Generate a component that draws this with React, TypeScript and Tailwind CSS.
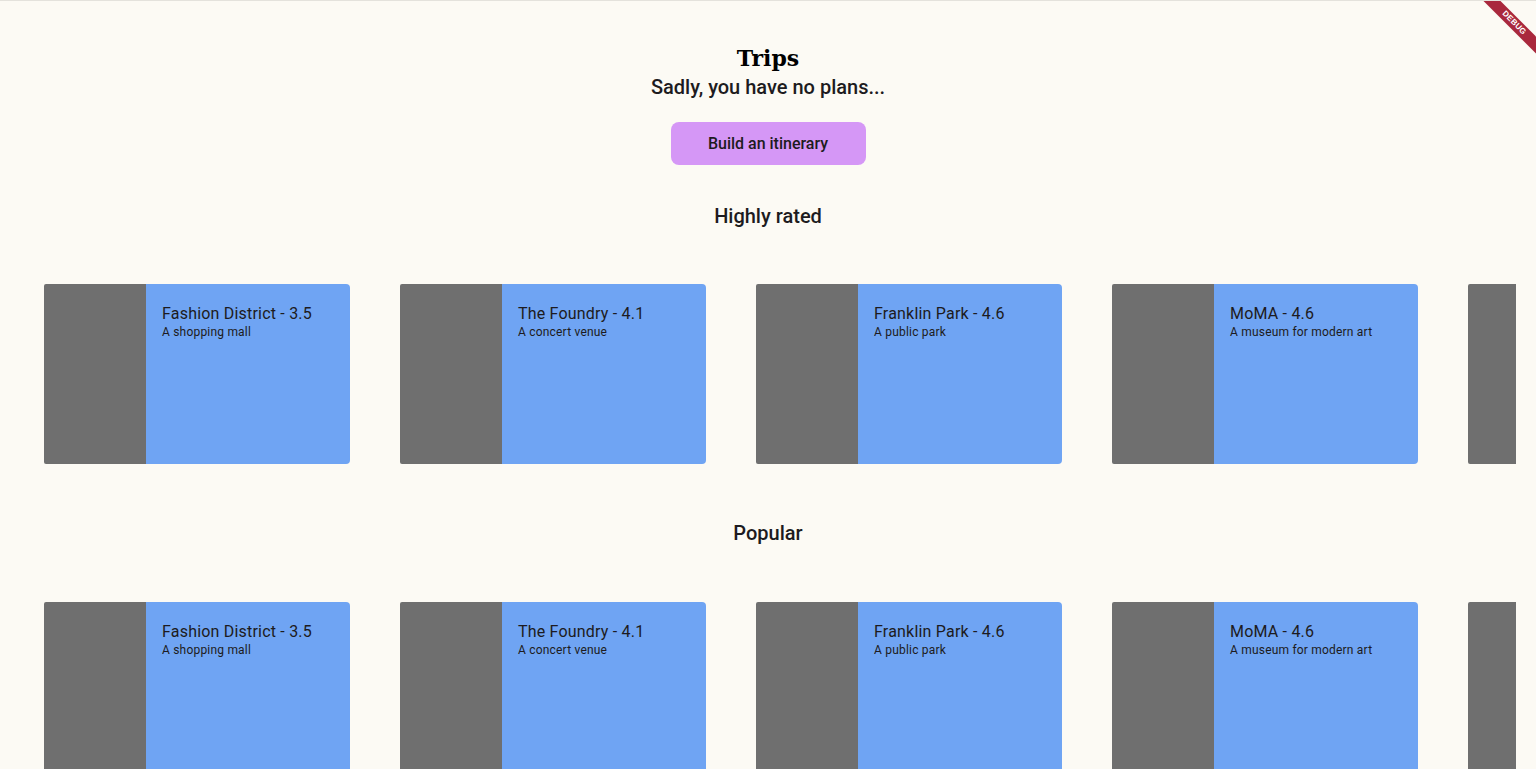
const places = [
  { name: "Fashion District", rating: "3.5", desc: "A shopping mall" },
  { name: "The Foundry", rating: "4.1", desc: "A concert venue" },
  { name: "Franklin Park", rating: "4.6", desc: "A public park" },
  { name: "MoMA", rating: "4.6", desc: "A museum for modern art" },
];

function PlaceCard({ place }: { place: (typeof places)[number] }) {
  return (
    <div className="flex h-[180px] w-[306px] shrink-0">
      <div className="w-[102px] shrink-0 rounded-l-[2px] bg-[#6f6f6f]" />
      <div className="flex-1 rounded-r-[4px] bg-[#6fa4f3] px-4 pt-[20px] text-[#1d1b20]">
        <p className="text-[16px] leading-[20px] tracking-[0.2px]">
          {place.name} - {place.rating}
        </p>
        <p className="text-[12px] leading-[16px] tracking-[0.2px]">{place.desc}</p>
      </div>
    </div>
  );
}

function PlaceRow() {
  return (
    <div className="mx-[20px] flex gap-[50px] overflow-hidden pl-[24px]">
      {places.map((p, i) => (
        <PlaceCard key={i} place={p} />
      ))}
      {/* next card peeking in from the edge */}
      <div className="h-[180px] w-[102px] shrink-0 rounded-l-[2px] bg-[#6f6f6f]" />
    </div>
  );
}

export default function App() {
  return (
    <div
      className="relative h-[769px] overflow-hidden border-t border-[#e4e2dc] bg-[#fcfaf4] text-[#1d1b20]"
      style={{ fontFamily: "Roboto, 'Liberation Sans', sans-serif" }}
    >
      {/* Header */}
      <div className="flex flex-col items-center pt-[43px]">
        <h1
          className="text-[22px] font-bold leading-[29px] text-black"
          style={{ fontFamily: "'DejaVu Serif', 'Liberation Serif', serif" }}
        >
          Trips
        </h1>
        <p className="text-[20px] font-medium leading-[28px]">
          Sadly, you have no plans...
        </p>
        <button className="mt-[21px] h-[43px] w-[195px] rounded-[8px] bg-[#d597f6] text-[16px] font-medium text-[#1d1b20]">
          Build an itinerary
        </button>
      </div>

      {/* Highly rated */}
      <h2 className="mt-[37px] text-center text-[20px] font-medium leading-[28px]">
        Highly rated
      </h2>
      <div className="mt-[54px]">
        <PlaceRow />
      </div>

      {/* Popular */}
      <h2 className="mt-[55px] text-center text-[20px] font-medium leading-[28px]">
        Popular
      </h2>
      <div className="mt-[55px]">
        <PlaceRow />
      </div>

      {/* Debug banner */}
      <div className="absolute right-0 top-0 h-[60px] w-[60px] overflow-hidden">
        <div
          className="absolute left-[-22px] top-[16px] flex h-[12px] w-[120px] rotate-45 items-center justify-center bg-[#a9283d] text-[8px] font-bold tracking-wide text-white"
          style={{ fontFamily: "'Liberation Sans', sans-serif" }}
        >
          DEBUG
        </div>
      </div>
    </div>
  );
}
